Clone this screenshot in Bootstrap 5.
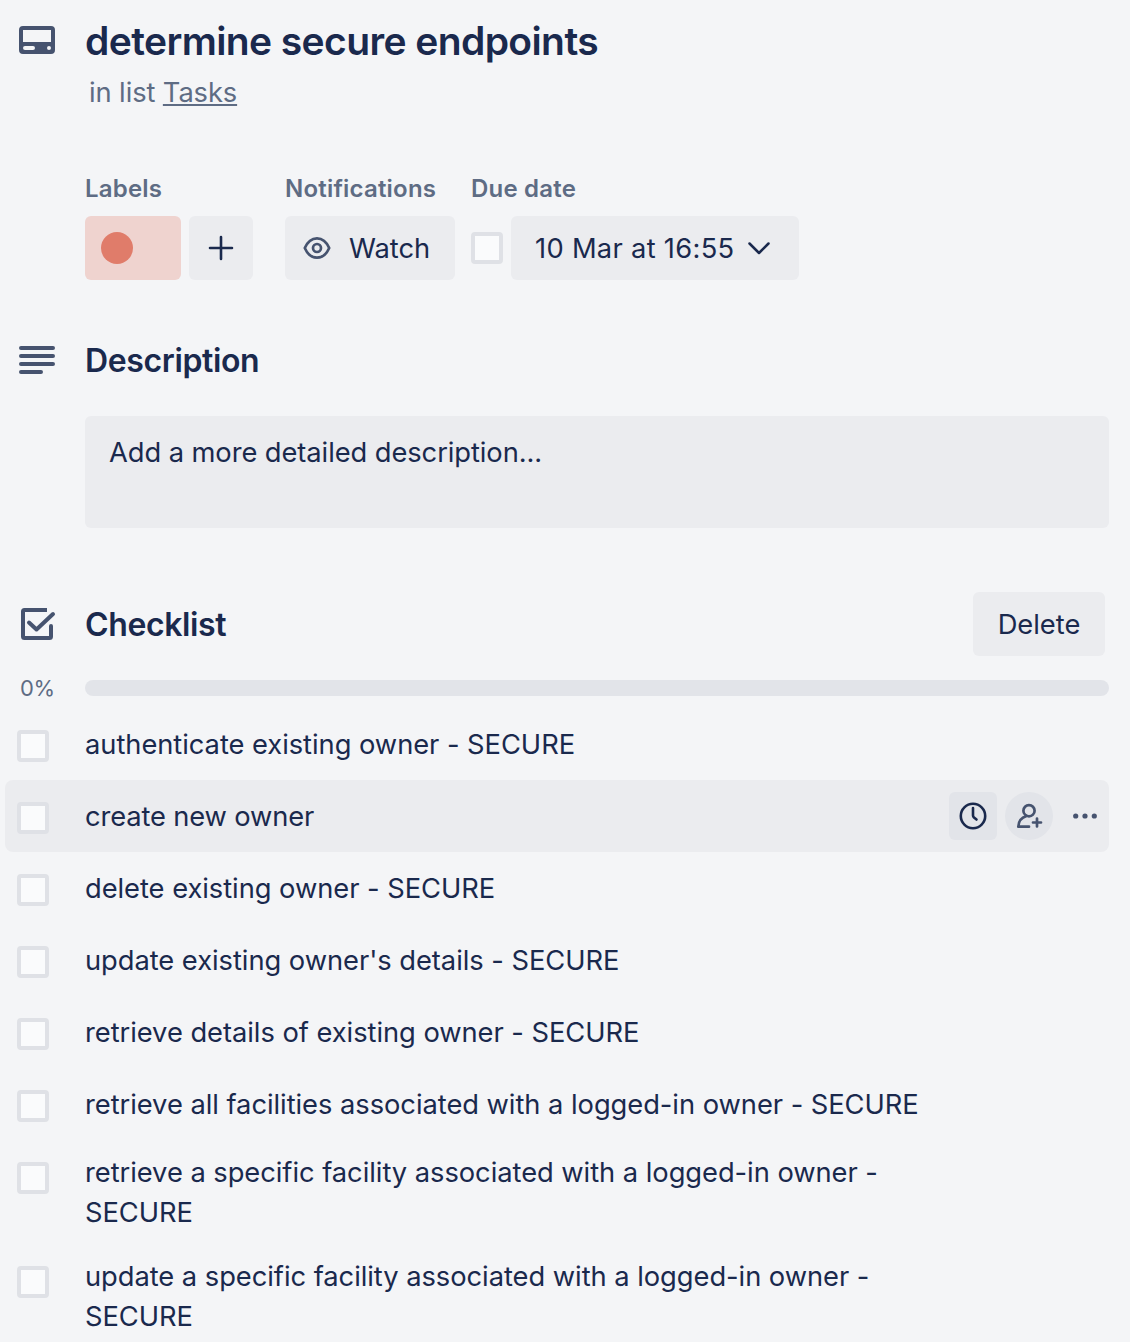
<!DOCTYPE html>
<html lang="en">
<head>
<meta charset="utf-8">
<meta name="viewport" content="width=device-width, initial-scale=1">
<title>determine secure endpoints</title>
<link href="https://cdn.jsdelivr.net/npm/bootstrap@5.3.0/dist/css/bootstrap.min.css" rel="stylesheet">
<style>
  body { background: #f4f5f7; color: #1a294d; font-family: Inter, "Liberation Sans", sans-serif; font-size: 27.3px; line-height: 40px; }
  svg { display: block; flex: none; }
  .task-window { height: 1342px; padding: 0 21px 0 5px; overflow: hidden; }
  .gutter { width: 80px; flex: none; padding-left: 14px; color: #46536f; }
  .muted-ink { color: #5e6c84; }
  .title-text { font-size: 39px; font-weight: 600; line-height: 48px; letter-spacing: -.6px; padding-top: 1px; }
  .list-line { margin: 8px 0 0 4px; letter-spacing: -.1px; }
  .section-title { font-size: 32px; font-weight: 600; line-height: 40px; letter-spacing: -.37px; padding-top: 1px; margin-bottom: -1px !important; }
  .field-row { margin: 55px 0 0 80px; }
  .labels-field { margin-right: 32px; }
  .watch-field { margin-right: 16px; }
  .field-label { font-size: 24px; font-weight: 600; line-height: 40px; letter-spacing: .2px; color: #5e6c84; padding-top: 1px; margin-bottom: 7px; }
  .soft-btn { --bs-btn-hover-bg: #e2e4e9; background: #ebecef; border: 0; border-radius: 6px; height: 64px; padding: 0; font-size: inherit; line-height: 40px; color: #1a294d; }
  .soft-btn span { padding-top: 2px; }
  .plus-btn { width: 64px; }
  .watch-btn { width: 170px; padding-left: 18px; gap: 18px; }
  .due-btn { width: 288px; padding-left: 24px; gap: 14px; letter-spacing: .3px; }
  .delete-btn { width: 132px; margin-right: 4px; }
  .label-chip { width: 96px; height: 64px; border-radius: 6px; background: #efd3cf; padding: 16px; }
  .label-dot { width: 32px; height: 32px; border-radius: 50%; background: #e07c6a; }
  .tick { appearance: none; flex: none; display: block; width: 32px; height: 32px; margin: 0; border: 4px solid #dfe1e6; border-radius: 4px; background: #fafbfc; }
  .desc-head { margin-top: 60px; }
  .desc-box { height: 112px; margin: 36px 0 64px 80px; border-radius: 6px; background: #ebecef; padding: 17px 24px; letter-spacing: -.07px; }
  .bar-line { height: 16px; margin: 24px 0 12px; }
  .progress.slim { height: 16px; border-radius: 8px; background: #e2e4e9; }
  .percent { width: 80px; flex: none; padding-left: 15px; font-size: 22px; letter-spacing: -.4px; color: #5e6c84; }
  .todo { padding: 16px 0 16px 12px; border-radius: 8px; }
  .todo .tick { margin: 6px 36px -6px 0; }
  .todo-text { max-width: 850px; padding-top: 1px; margin-bottom: -1px; letter-spacing: -.04px; }
  .todo.current { background: #ebecef; }
  .todo.current .todo-text { letter-spacing: -.13px; }
  .todo.two-line { padding-top: 12px; padding-bottom: 12px; }
  .todo.two-line .tick { margin-top: 10px; }
  .row-actions { margin: -4px 0 -4px auto; }
  .row-action { width: 48px; height: 48px; background: #e2e4e9; border: 0; border-radius: 6px; padding: 0; color: #1a294d; }
  .row-action.quiet { color: #46536f; }
</style>
<script src="https://cdn.jsdelivr.net/npm/bootstrap@5.3.0/dist/js/bootstrap.bundle.min.js"></script>
</head>
<body>
<main class="task-window">
  <header class="d-flex pt-3">
    <div class="gutter pt-2">
      <svg width="36" height="32" viewBox="0 0 36 32"><path fill="currentColor" fill-rule="evenodd" d="M4 2H32A4 4 0 0 1 36 6V26A4 4 0 0 1 32 30H4A4 4 0 0 1 0 26V6A4 4 0 0 1 4 2ZM4 6V18H32V6ZM6 22A2 2 0 0 0 6 26H14A2 2 0 0 0 14 22ZM30 22A2 2 0 1 0 30 26A2 2 0 0 0 30 22Z"/></svg>
    </div>
    <div>
      <h1 class="title-text m-0">determine secure endpoints</h1>
      <div class="muted-ink list-line">in list <u>Tasks</u></div>
    </div>
  </header>

  <section class="field-row d-flex">
    <div class="labels-field">
      <div class="field-label">Labels</div>
      <div class="d-flex gap-2">
        <div class="label-chip"><div class="label-dot"></div></div>
        <button class="btn soft-btn plus-btn d-flex align-items-center justify-content-center" aria-label="Add label">
          <svg width="26" height="26" viewBox="0 0 26 26" fill="none" stroke="currentColor" stroke-width="2.6" stroke-linecap="round"><path d="M13 2V24M2 13H24"/></svg>
        </button>
      </div>
    </div>
    <div class="watch-field">
      <div class="field-label">Notifications</div>
      <button class="btn soft-btn watch-btn d-flex align-items-center">
        <svg width="28" height="24" viewBox="0 0 28 24" fill="none" stroke="#46536f" stroke-width="2.7" stroke-linejoin="round"><path d="M1.800 12C4.500 5.800 8.800 2.300 14 2.300S23.500 5.800 26.200 12C23.500 18.200 19.200 21.700 14 21.700S4.500 18.200 1.800 12Z"/><circle cx="14" cy="12" r="4"/></svg>
        <span>Watch</span>
      </button>
    </div>
    <div>
      <div class="field-label">Due date</div>
      <div class="d-flex align-items-center gap-2">
        <input type="checkbox" class="tick" aria-label="Due date complete">
        <button class="btn soft-btn due-btn d-flex align-items-center">
          <span>10 Mar at 16:55</span>
          <svg width="22" height="14" viewBox="0 0 22 14" fill="none" stroke="currentColor" stroke-width="2.5" stroke-linecap="round" stroke-linejoin="round"><path d="M1.500 2.500L11 12 20.500 2.500"/></svg>
        </button>
      </div>
    </div>
  </section>

  <section>
    <div class="desc-head d-flex align-items-center">
      <div class="gutter">
        <svg width="36" height="28" viewBox="0 0 36 28" stroke="currentColor" stroke-width="4" stroke-linecap="round"><path d="M2 2H34M2 10H34M2 18H34M2 26H22"/></svg>
      </div>
      <h2 class="section-title m-0">Description</h2>
    </div>
    <div class="desc-box">Add a more detailed description...</div>
  </section>

  <section>
    <div class="d-flex align-items-center">
      <div class="gutter">
        <svg width="38" height="36" viewBox="0 0 38 36" fill="none" stroke="currentColor" stroke-width="4" stroke-linejoin="round"><path d="M28 4H5.500Q4 4 4 5.500V30.500Q4 32 5.500 32H30.500Q32 32 32 30.500V20"/><path stroke-linecap="round" d="M10 16.500L17.500 23.500 34 8M32 20V21"/></svg>
      </div>
      <h2 class="section-title m-0 me-auto">Checklist</h2>
      <button class="btn soft-btn delete-btn d-flex align-items-center justify-content-center"><span>Delete</span></button>
    </div>
    <div class="bar-line d-flex align-items-center">
      <div class="percent">0%</div>
      <div class="progress slim flex-grow-1" role="progressbar" aria-valuenow="0" aria-valuemin="0" aria-valuemax="100"></div>
    </div>

    <div>
      <div class="todo d-flex align-items-start"><input type="checkbox" class="tick"><div class="todo-text">authenticate existing owner - SECURE</div></div>
      <div class="todo current d-flex align-items-start"><input type="checkbox" class="tick"><div class="todo-text">create new owner</div>
        <div class="row-actions d-flex gap-2">
          <button class="row-action d-flex align-items-center justify-content-center" aria-label="Due date">
            <svg width="28" height="28" viewBox="0 0 28 28" fill="none" stroke="currentColor" stroke-width="2.6" stroke-linecap="round" stroke-linejoin="round"><circle cx="14" cy="14" r="12.200"/><path d="M14 6V13.500Q14 14.500 15 15.500L17.500 17.500"/></svg>
          </button>
          <button class="row-action quiet rounded-circle d-flex align-items-center justify-content-center" aria-label="Assign">
            <svg width="28" height="28" viewBox="0 0 28 28" fill="none" stroke="currentColor" stroke-width="2.7" stroke-linecap="round" stroke-linejoin="round"><circle cx="14" cy="8.700" r="5.600"/><path d="M11.500 14C6.500 15.500 3.500 19 3.300 24.700H14M22 16.500V24.500M18 20.500H26"/></svg>
          </button>
          <button class="row-action quiet bg-transparent d-flex align-items-center justify-content-center" aria-label="More">
            <svg width="24" height="6" viewBox="0 0 24 6" fill="currentColor"><circle cx="2.700" cy="3" r="2.600"/><circle cx="12" cy="3" r="2.600"/><circle cx="21.300" cy="3" r="2.600"/></svg>
          </button>
        </div>
      </div>
      <div class="todo d-flex align-items-start"><input type="checkbox" class="tick"><div class="todo-text">delete existing owner - SECURE</div></div>
      <div class="todo d-flex align-items-start"><input type="checkbox" class="tick"><div class="todo-text">update existing owner's details - SECURE</div></div>
      <div class="todo d-flex align-items-start"><input type="checkbox" class="tick"><div class="todo-text">retrieve details of existing owner - SECURE</div></div>
      <div class="todo d-flex align-items-start"><input type="checkbox" class="tick"><div class="todo-text">retrieve all facilities associated with a logged-in owner - SECURE</div></div>
      <div class="todo two-line d-flex align-items-start"><input type="checkbox" class="tick"><div class="todo-text">retrieve a specific facility associated with a logged-in owner - SECURE</div></div>
      <div class="todo two-line d-flex align-items-start"><input type="checkbox" class="tick"><div class="todo-text">update a specific facility associated with a logged-in owner - SECURE</div></div>
    </div>
  </section>
</main>
</body>
</html>
